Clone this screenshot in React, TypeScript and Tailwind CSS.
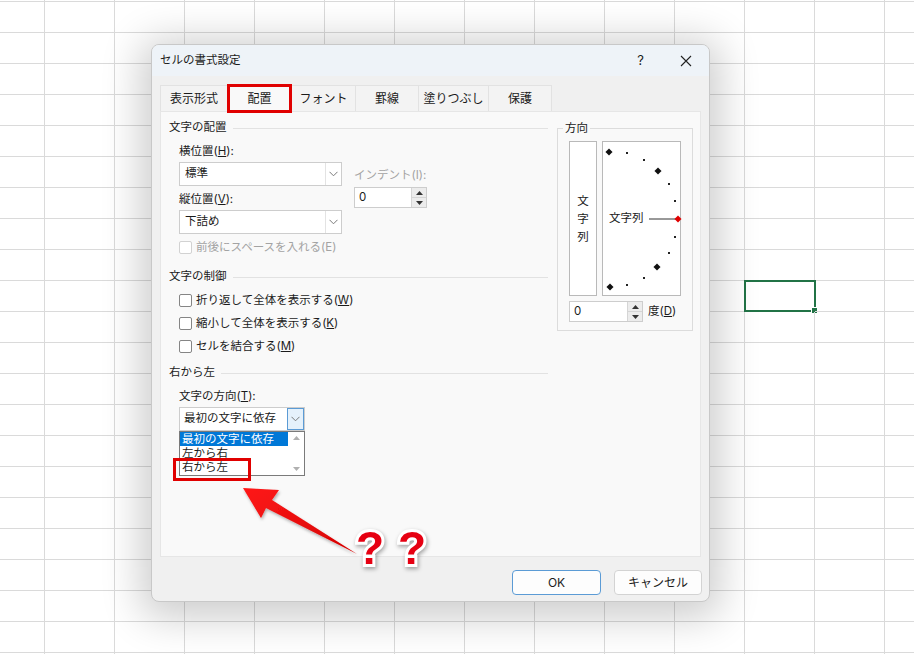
import React from "react";

const GRID_ROWS = 23;
const GRID_COLS = 14;

function Sheet() {
  return (
    <div className="flex flex-col">
      {Array.from({ length: GRID_ROWS }).map((_, r) => (
        <div key={r} className={`flex shrink-0 ${r === 0 ? "h-[2px]" : "h-[31px]"}`}>
          {Array.from({ length: GRID_COLS }).map((_, c) => (
            <div
              key={c}
              className={`relative h-full shrink-0 border-r border-b border-[#dadada] ${c === 0 ? "w-[45px]" : "w-[70px]"}`}
            >
              {r === 10 && c === 11 && (
                <div className="absolute -left-[1px] -top-[1px] h-[32px] w-[72px] border-2 border-[#217346]">
                  <div className="absolute -right-[4px] -bottom-[4px] h-[7px] w-[7px] border border-white bg-[#217346]" />
                </div>
              )}
            </div>
          ))}
        </div>
      ))}
    </div>
  );
}

function SectionTitle({ children }: { children: React.ReactNode }) {
  return (
    <div className="flex h-[16px] items-center gap-[6px]">
      <span>{children}</span>
      <div className="h-px flex-1 bg-[#e2e2e2]" />
    </div>
  );
}

function Chevron() {
  return (
    <svg width="9" height="6" viewBox="0 0 9 6">
      <path d="M0.5 0.8 L4.5 4.8 L8.5 0.8" fill="none" stroke="#7a7a7a" strokeWidth="1" />
    </svg>
  );
}

function Select({ value, width }: { value: string; width: string }) {
  return (
    <div className={`flex h-[24px] border border-[#cdcdcd] bg-white ${width}`}>
      <span className="flex flex-1 items-center pl-[5px]">{value}</span>
      <span className="flex w-[16px] items-center justify-center border-l border-[#e3e3e3]">
        <Chevron />
      </span>
    </div>
  );
}

function Tri({ up, color = "#333" }: { up?: boolean; color?: string }) {
  return (
    <svg width="7" height="4" viewBox="0 0 7 4">
      <path d={up ? "M0 4 L3.5 0 L7 4 Z" : "M0 0 L3.5 4 L7 0 Z"} fill={color} />
    </svg>
  );
}

function Spinner({ width }: { width: string }) {
  return (
    <div className={`flex h-[21px] border border-[#cdcdcd] bg-white ${width}`}>
      <span className="flex flex-1 items-center pl-[4px]">0</span>
      <span className="flex w-[15px] flex-col border-l border-[#d5d5d5]">
        <span className="flex flex-1 items-center justify-center border-b border-[#d5d5d5] bg-[#ececec]">
          <Tri up />
        </span>
        <span className="flex flex-1 items-center justify-center bg-[#ececec]">
          <Tri />
        </span>
      </span>
    </div>
  );
}

function Check({ label, disabled }: { label: React.ReactNode; disabled?: boolean }) {
  return (
    <div className={`flex h-[23px] items-center gap-[4px] ${disabled ? "text-[#a3a3a3]" : ""}`}>
      <span
        className={`h-[13px] w-[13px] rounded-[2px] border bg-white ${disabled ? "border-[#d2d2d2]" : "border-[#858585]"}`}
      />
      <span>{label}</span>
    </div>
  );
}

function Dial() {
  const big = [
    [6, 10],
    [55, 29],
    [54, 125],
    [7, 145],
  ];
  const small = [
    [24, 11],
    [41, 18],
    [66, 42],
    [72, 59],
    [72, 95],
    [66, 111],
    [41, 136],
    [24, 143],
  ];
  return (
    <div className="relative ml-[5px] flex h-[155px] w-[79px] items-center border border-[#b9b9b9] bg-white pl-[6px]">
      <svg className="absolute inset-0" width="79" height="155" viewBox="0 0 79 155">
        {big.map(([x, y], i) => (
          <rect key={i} x={x - 2.5} y={y - 2.5} width="5" height="5" fill="#111" transform={`rotate(45 ${x} ${y})`} />
        ))}
        {small.map(([x, y], i) => (
          <rect key={i} x={x - 1} y={y - 1} width="2" height="2" fill="#222" />
        ))}
        <line x1="46" y1="77" x2="73" y2="77" stroke="#333" strokeWidth="1" />
        <rect x="72.5" y="74.5" width="5" height="5" fill="#e00000" transform="rotate(45 75 77)" />
      </svg>
      <span className="relative">文字列</span>
    </div>
  );
}

const tabs = ["表示形式", "配置", "フォント", "罫線", "塗りつぶし", "保護"];
const tabWidths = ["w-[68px]", "w-[64px]", "w-[64px]", "w-[63px]", "w-[70px]", "w-[63px]"];

function Dialog() {
  return (
    <div className="absolute left-[151px] top-[44px] flex h-[558px] w-[559px] flex-col overflow-hidden rounded-[8px] border border-[#c8c8c8] bg-[#f0f0f0] shadow-[0_6px_40px_10px_rgba(0,0,0,0.2)]">
      <div className="flex h-[31px] shrink-0 items-center bg-[#eef3f8] pl-[8px] pr-[17px]">
        <span className="flex-1">セルの書式設定</span>
        <span className="mr-[36px] text-[13px]">?</span>
        <svg width="12" height="12" viewBox="0 0 12 12">
          <path d="M1 1 L11 11 M11 1 L1 11" stroke="#222" strokeWidth="1.1" />
        </svg>
      </div>

      <div className="flex h-[35px] shrink-0 items-end pl-[8px]">
        {tabs.map((t, i) => (
          <div
            key={t}
            className={`relative flex h-[26px] items-center justify-center border-t border-r border-[#e2e2e2] text-[12px] ${tabWidths[i]} ${i === 0 ? "border-l" : ""} ${i === 1 ? "bg-[#f9f9f9]" : "bg-[#f3f3f3]"}`}
          >
            {t}
            {i === 1 && (
              <span className="absolute -left-[1px] -top-[2px] -bottom-[2px] -right-[1px] border-[3px] border-[#e00000]" />
            )}
          </div>
        ))}
      </div>

      <div className="mx-[8px] flex h-[446px] shrink-0 border border-[#e6e6e6] bg-[#f9f9f9] pl-[8px] pt-[8px]">
        <div className="w-[379px]">
          <SectionTitle>文字の配置</SectionTitle>
          <div className="mt-[8px] pl-[10px]">
            <div className="flex">
              <div className="w-[163px]">
                <div className="h-[14px] leading-[14px]">
                  横位置(<span className="underline">H</span>):
                </div>
                <div className="mt-[4px]">
                  <Select value="標準" width="w-[163px]" />
                </div>
                <div className="mt-[6px] h-[14px] leading-[14px]">
                  縦位置(<span className="underline">V</span>):
                </div>
                <div className="mt-[4px]">
                  <Select value="下詰め" width="w-[163px]" />
                </div>
              </div>
              <div className="ml-[12px] pt-[24px]">
                <div className="h-[14px] leading-[14px] text-[#a3a3a3]">インデント(I):</div>
                <div className="mt-[5px]">
                  <Spinner width="w-[73px]" />
                </div>
              </div>
            </div>
            <div className="mt-[2px]">
              <Check disabled label="前後にスペースを入れる(E)" />
            </div>
          </div>

          <div className="mt-[10px]">
            <SectionTitle>文字の制御</SectionTitle>
          </div>
          <div className="mt-[4px] pl-[10px]">
            <Check
              label={
                <>
                  折り返して全体を表示する(<span className="underline">W</span>)
                </>
              }
            />
            <Check
              label={
                <>
                  縮小して全体を表示する(<span className="underline">K</span>)
                </>
              }
            />
            <Check
              label={
                <>
                  セルを結合する(<span className="underline">M</span>)
                </>
              }
            />
          </div>

          <div className="mt-[7px]">
            <SectionTitle>右から左</SectionTitle>
          </div>
          <div className="mt-[8px] pl-[10px]">
            <div className="h-[14px] leading-[14px]">
              文字の方向(<span className="underline">T</span>):
            </div>
            <div className="mt-[4px] flex h-[24px] w-[126px] border border-[#cdcdcd] bg-white">
              <span className="flex flex-1 items-center pl-[4px]">最初の文字に依存</span>
              <span className="flex w-[17px] items-center justify-center border border-[#5b9bd5] bg-[#e5f1fb]">
                <Chevron />
              </span>
            </div>
            <div className="relative flex h-[45px] w-[126px] border border-[#7a7a7a] bg-white">
              <div className="flex-1">
                <div className="h-[14px] bg-[#0078d7] pl-[2px] leading-[14px] text-white">最初の文字に依存</div>
                <div className="h-[14px] pl-[2px] leading-[14px]">左から右</div>
                <div className="h-[14px] pl-[2px] leading-[14px]">右から左</div>
              </div>
              <div className="flex w-[16px] flex-col items-center justify-between py-[4px]">
                <Tri up color="#b0b0b0" />
                <Tri color="#b0b0b0" />
              </div>
              <span className="absolute -left-[7px] top-[26px] h-[23px] w-[78px] border-[3px] border-[#e00000]" />
            </div>
          </div>
        </div>

        <fieldset className="ml-[9px] h-[211px] w-[135px] border border-[#dcdcdc]">
          <legend className="ml-[5px] px-[2px] leading-[16px]">方向</legend>
          <div className="px-[11px] pt-[5px]">
            <div className="flex">
              <div className="flex h-[155px] w-[28px] flex-col items-center justify-center border border-[#b9b9b9] bg-white leading-[18px]">
                <span>文</span>
                <span>字</span>
                <span>列</span>
              </div>
              <Dial />
            </div>
            <div className="mt-[5px] flex items-center">
              <Spinner width="w-[74px]" />
              <span className="ml-[5px]">
                度(<span className="underline">D</span>)
              </span>
            </div>
          </div>
        </fieldset>
      </div>

      <div className="flex flex-1 items-start justify-end gap-[13px] pr-[7px] pt-[13px]">
        <button className="h-[25px] w-[89px] rounded-[4px] border border-[#5b9bd5] bg-[#fdfdfd] text-[12px]">OK</button>
        <button className="h-[25px] w-[88px] rounded-[4px] border border-[#d3d3d3] bg-[#fdfdfd] text-[12px]">キャンセル</button>
      </div>
    </div>
  );
}

export default function App() {
  return (
    <div className="relative h-[654px] w-[914px] overflow-hidden bg-white font-['Inter','Noto_Sans_CJK_JP',sans-serif] text-[11.5px] text-[#1b1b1b]">
      <Sheet />
      <Dialog />
      <svg className="pointer-events-none absolute left-0 top-0" width="914" height="654" viewBox="0 0 914 654">
        <defs>
          <linearGradient id="arrowFill" x1="0" y1="0" x2="1" y2="1">
            <stop offset="0" stopColor="#ff1a1a" />
            <stop offset="1" stopColor="#d40000" />
          </linearGradient>
          <filter id="arrowShadow" x="-20%" y="-20%" width="140%" height="140%">
            <feDropShadow dx="1" dy="2" stdDeviation="1.5" floodColor="#000" floodOpacity="0.3" />
          </filter>
        </defs>
        <polygon
          points="243,488 279,490 272,500 357,554 266,508 261,518"
          fill="url(#arrowFill)"
          filter="url(#arrowShadow)"
        />
      </svg>
      <span className="absolute left-[356px] top-[525px] font-['Liberation_Sans',sans-serif] text-[46px] font-black leading-none text-[#e60012] [paint-order:stroke_fill] [-webkit-text-stroke:6px_white] drop-shadow-[1px_2px_2px_rgba(0,0,0,0.35)]">
        ?
      </span>
      <span className="absolute left-[398px] top-[525px] font-['Liberation_Sans',sans-serif] text-[46px] font-black leading-none text-[#e60012] [paint-order:stroke_fill] [-webkit-text-stroke:6px_white] drop-shadow-[1px_2px_2px_rgba(0,0,0,0.35)]">
        ?
      </span>
    </div>
  );
}
